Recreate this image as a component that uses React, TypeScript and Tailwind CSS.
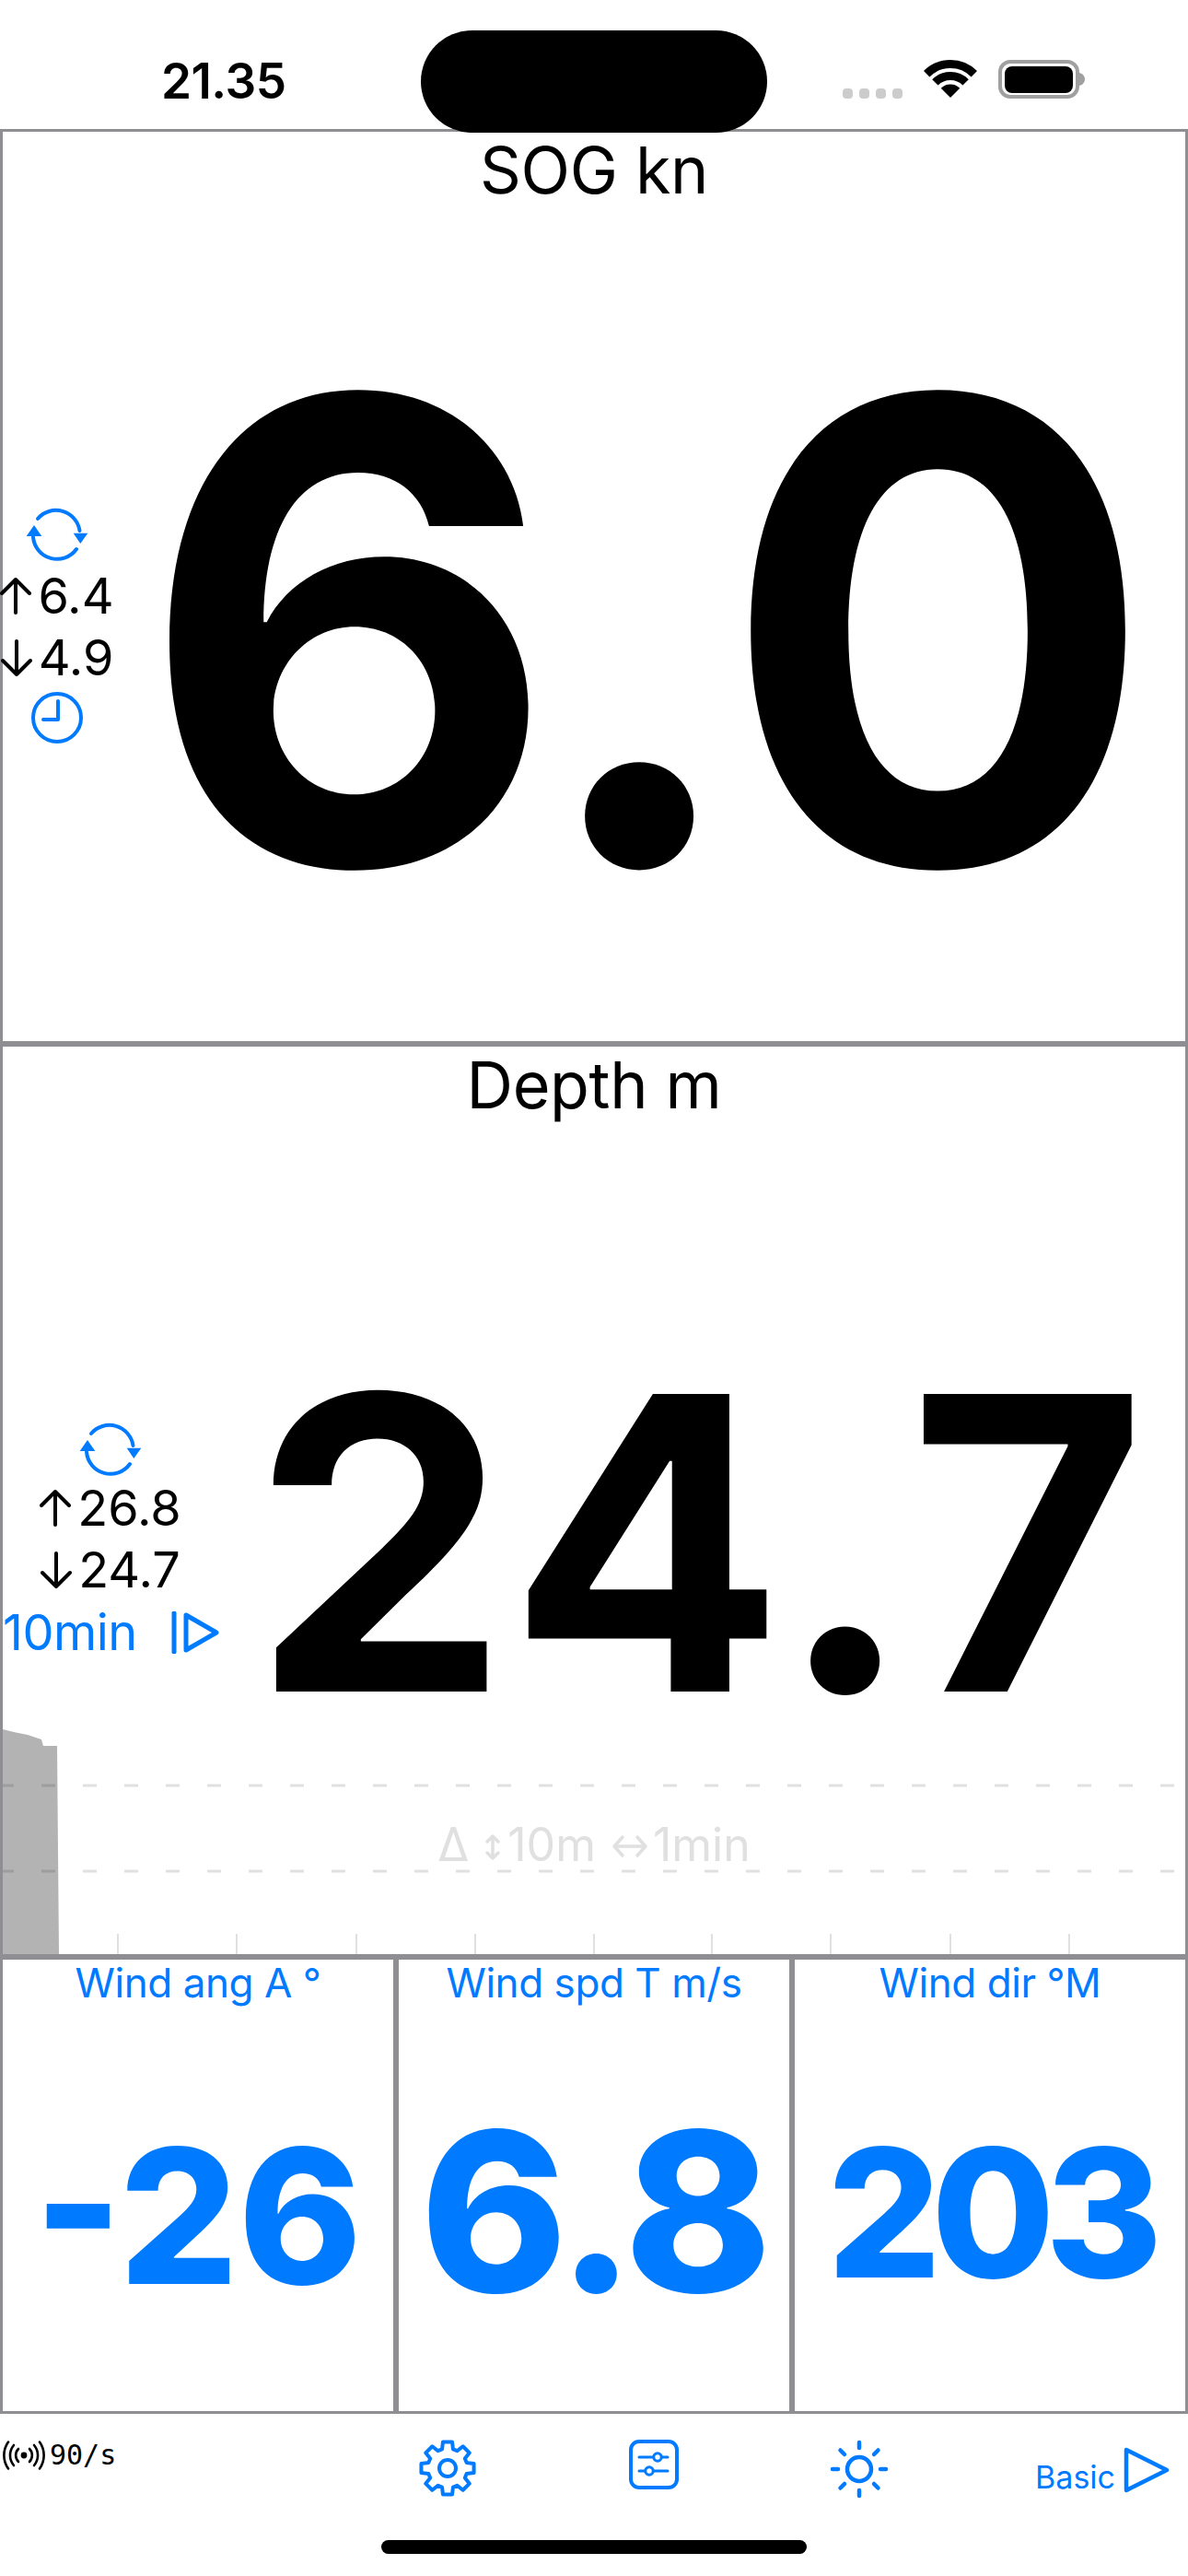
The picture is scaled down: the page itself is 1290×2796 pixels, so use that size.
import React from 'react';

const BLUE = '#007aff';

function RefreshIcon() {
  return (
    <svg width="68" height="60" viewBox="-34 -30 68 60" fill="none" stroke={BLUE} strokeWidth="4" strokeLinecap="round">
      <path d="M-21 -17 A26 26 0 0 1 24.5 -4" />
      <path d="M21 16 A26 26 0 0 1 -26 3" />
      <path d="M17.7 -1.3 H33.3 L25.3 10 Z" fill={BLUE} stroke="none" />
      <path d="M-33.3 2 H-16.7 L-25 -10 Z" fill={BLUE} stroke="none" />
    </svg>
  );
}

function ClockIcon() {
  return (
    <svg width="60" height="60" viewBox="-30 -30 60 60" fill="none" stroke={BLUE} strokeWidth="4" strokeLinecap="round" strokeLinejoin="round">
      <circle r="26" />
      <path d="M1 -18 V2 H-15" />
    </svg>
  );
}

function Arrow({ up }: { up?: boolean }) {
  return (
    <svg width="34" height="42" viewBox="0 0 34 42" fill="none" stroke="#000" strokeWidth="4" strokeLinecap="round" strokeLinejoin="round" className={up ? '' : 'rotate-180'}>
      <path d="M17 39 V3 M2 18 L17 3 L32 18" />
    </svg>
  );
}

function MinMax({ up, value }: { up?: boolean; value: string }) {
  return (
    <div className="flex items-center h-[67px] text-[54px] leading-none text-black gap-[7px]">
      <Arrow up={up} />
      <span>{value}</span>
    </div>
  );
}

function GearIcon() {
  // 8 teeth, one pointing straight up
  const pts: string[] = [];
  const polar = (r: number, deg: number) => {
    const a = ((deg - 90) * Math.PI) / 180;
    return `${(r * Math.cos(a)).toFixed(2)} ${(r * Math.sin(a)).toFixed(2)}`;
  };
  for (let i = 0; i < 8; i++) {
    const a = i * 45;
    pts.push(polar(21.5, a - 16), polar(29, a - 10), polar(29, a + 10), polar(21.5, a + 16));
  }
  return (
    <svg width="66" height="66" viewBox="-33 -33 66 66" fill="none" stroke={BLUE} strokeWidth="4" strokeLinejoin="round">
      <path d={`M${pts.join(' L')} Z`} />
      <circle r="9" />
    </svg>
  );
}

function Cell({ label, value, size, top }: { label: string; value: string; size: string; top: string }) {
  return (
    <div className="border-[3px] border-[#8e8e93] flex flex-col items-center min-w-0">
      <div className="text-[44px] leading-[50px] tracking-[-0.01em] text-[#007aff]">{label}</div>
      <div className={`font-extrabold leading-none text-[#007aff] whitespace-nowrap ${size} ${top}`}>{value}</div>
    </div>
  );
}

export default function App() {
  const ticks = [128, 257, 387, 516, 645, 773, 902, 1032, 1161];

  return (
    <div className="relative w-[1290px] h-[2796px] bg-white overflow-hidden flex flex-col font-['Inter',sans-serif]">
      {/* status bar */}
      <div className="h-[140px] shrink-0 flex items-start">
        <div className="ml-[175px] mt-[59px] text-[53px] leading-[58px] font-semibold tracking-[-0.01em] text-black">21.35</div>
        <div className="ml-auto mt-[65px] mr-[112px] flex items-end gap-[23px]">
          <div className="flex gap-[7px] mb-[1px]">
            <div className="w-[11px] h-[11px] rounded-[4px] bg-[#cccccc]" />
            <div className="w-[11px] h-[11px] rounded-[4px] bg-[#cccccc]" />
            <div className="w-[11px] h-[11px] rounded-[4px] bg-[#cccccc]" />
            <div className="w-[11px] h-[11px] rounded-[4px] bg-[#cccccc]" />
          </div>
          <svg width="58" height="43" viewBox="0 0 58 43" fill="none" stroke="#000">
            <path d="M3.2 15.2 A36.5 36.5 0 0 1 54.8 15.2" strokeWidth="9" />
            <path d="M12.4 24.4 A23.5 23.5 0 0 1 45.6 24.4" strokeWidth="9" />
            <path d="M29 41 L18.75 30.75 A14.5 14.5 0 0 1 39.25 30.75 Z" fill="#000" stroke="none" />
          </svg>
          <svg width="94" height="43" viewBox="0 0 94 43" fill="none">
            <rect x="2" y="2" width="84" height="38" rx="11" stroke="#a0a0a0" strokeWidth="4" />
            <rect x="7" y="7" width="74" height="29" rx="8" fill="#000" />
            <path d="M88 14 C92 15 94 18 94 21 C94 24 92 27 88 28 Z" fill="#a0a0a0" />
          </svg>
        </div>
      </div>
      <div className="absolute left-[457px] top-[33px] w-[376px] h-[111px] rounded-[56px] bg-black z-10" />

      {/* SOG */}
      <div className="h-[993px] shrink-0 border-[3px] border-[#8e8e93] flex flex-col">
        <div className="text-center text-[70px] leading-[76px] tracking-[-0.005em] text-black mt-[4px]">SOG kn</div>
        <div className="flex flex-1 items-center">
          <div className="w-[118px] shrink-0 flex flex-col items-center mt-[5px]">
            <div className="mb-[4px] flex">
              <RefreshIcon />
            </div>
            <MinMax up value="6.4" />
            <MinMax value="4.9" />
            <div className="mt-[1px] flex">
              <ClockIcon />
            </div>
          </div>
          <div className="ml-[31px] mt-[14px] font-bold text-[698px] leading-none tracking-[-0.01em] text-black whitespace-nowrap">6.0</div>
        </div>
      </div>

      {/* Depth */}
      <div className="h-[991px] shrink-0 border-[3px] border-[#8e8e93] flex flex-col">
        <div className="text-center text-[70px] leading-[76px] tracking-[-0.005em] text-black mt-[4px]">Depth m</div>
        <div className="flex flex-1 items-end">
          <div className="w-[234px] shrink-0 flex flex-col items-center mb-[75px]">
            <RefreshIcon />
            <MinMax up value="26.8" />
            <MinMax value="24.7" />
            <div className="self-stretch flex items-center text-[54px] leading-[60px] tracking-[-0.01em] text-[#007aff] mt-[5px]">
              <span>10min</span>
              <svg width="52" height="46" viewBox="0 0 52 46" fill="none" stroke={BLUE} strokeWidth="5" strokeLinecap="round" strokeLinejoin="round" className="ml-[37px] shrink-0">
                <path d="M3 2 V44" />
                <path d="M16 4 V42 L49 23 Z" />
              </svg>
            </div>
          </div>
          <div className="ml-[36px] font-bold text-[444px] leading-[404px] tracking-[0.014em] text-black whitespace-nowrap">24.7</div>
        </div>
        <div className="relative h-[244px] shrink-0">
          <svg width="1284" height="244" viewBox="0 0 1284 244" className="block">
            <path d="M0 0 L12 3 L27 6 L42 11 L44 18 L59 18 L61 244 L0 244 Z" fill="#b3b3b3" />
            <path d="M0 61 H1284" stroke="#000" strokeOpacity="0.12" strokeWidth="3" strokeDasharray="15 30" strokeDashoffset="3" />
            <path d="M0 154 H1284" stroke="#000" strokeOpacity="0.12" strokeWidth="3" strokeDasharray="15 30" strokeDashoffset="3" />
            {ticks.map((t) => (
              <path key={t} d={`M${t - 3} 222 V244`} stroke="#e0e0e0" strokeWidth="2" />
            ))}
          </svg>
          <div className="absolute inset-x-0 top-[95px] flex items-center justify-center text-[50px] leading-[60px] text-[#e0e0e0] whitespace-nowrap">
            <span>Δ</span>
            <svg width="18" height="30" viewBox="0 0 18 30" fill="none" stroke="#e0e0e0" strokeWidth="3.5" strokeLinecap="round" strokeLinejoin="round" className="ml-[17px] mt-[6px]">
              <path d="M9 3 V27 M3 9 L9 3 L15 9 M3 21 L9 27 L15 21" />
            </svg>
            <span className="ml-[7px]">10m</span>
            <svg width="40" height="26" viewBox="0 0 40 26" fill="none" stroke="#e0e0e0" strokeWidth="3.5" strokeLinecap="round" strokeLinejoin="round" className="ml-[17px] mr-[5px] mt-[4px]">
              <path d="M3 13 H37 M12 3 L3 13 L12 23 M28 3 L37 13 L28 23" />
            </svg>
            <span>1min</span>
          </div>
        </div>
      </div>

      {/* Wind */}
      <div className="h-[496px] shrink-0 grid grid-cols-3">
        <Cell label="Wind ang A °" value="-26" size="text-[203px]" top="mt-[127px]" />
        <Cell label="Wind spd T m/s" value="6.8" size="text-[242px] tracking-[-0.02em]" top="mt-[102px]" />
        <Cell label="Wind dir °M" value="203" size="text-[194px] tracking-[-0.055em]" top="mt-[128px]" />
      </div>

      {/* toolbar */}
      <div className="flex items-start flex-1 relative">
        <div className="flex items-center gap-[5px] mt-[29px] pl-[3px] w-[453px] shrink-0">
          <svg width="46" height="32" viewBox="-23 -16 46 32" fill="none" stroke="#000" strokeWidth="2.6" strokeLinecap="round">
            <circle r="3.4" fill="#000" stroke="none" />
            <path d="M-6 -7 A10 10 0 0 0 -6 7 M6 -7 A10 10 0 0 1 6 7" />
            <path d="M-11 -11 A17 17 0 0 0 -11 11 M11 -11 A17 17 0 0 1 11 11" />
            <path d="M-17 -14.5 A25 25 0 0 0 -17 14.5 M17 -14.5 A25 25 0 0 1 17 14.5" />
          </svg>
          <span className="font-['DejaVu_Sans_Mono',monospace] text-[30px] leading-none text-black">90/s</span>
        </div>
        <div className="mt-[26px] flex">
          <GearIcon />
        </div>
        <svg width="54" height="54" viewBox="0 0 54 54" fill="none" stroke={BLUE} strokeWidth="3" strokeLinecap="round" className="mt-[28px] ml-[164px]">
          <rect x="2" y="2" width="50" height="50" rx="9" strokeWidth="4" />
          <path d="M11 19 H26 M36 19 H42 M11 34 H17 M27 34 H42" />
          <circle cx="31" cy="19" r="4.2" />
          <circle cx="22" cy="34" r="4.2" />
        </svg>
        <svg width="66" height="66" viewBox="-33 -33 66 66" fill="none" stroke={BLUE} strokeWidth="4.5" strokeLinecap="round" className="mt-[27px] ml-[163px]">
          <circle r="13" />
          <path d="M0 -29 V-23 M0 23 V29 M-29 0 H-23 M23 0 H29 M-20.5 -20.5 L-16 -16 M20.5 -20.5 L16 -16 M-20.5 20.5 L-16 16 M20.5 20.5 L16 16" />
        </svg>
        <div className="flex items-end ml-auto mr-[20px] mt-[36px]">
          <span className="text-[34px] leading-[44px] text-[#007aff] translate-y-[3px]">Basic</span>
          <svg width="50" height="50" viewBox="0 0 50 50" fill="none" stroke={BLUE} strokeWidth="4.5" strokeLinejoin="round" className="ml-[9px] mb-[2px]">
            <path d="M3 3 V47 L47 25 Z" />
          </svg>
        </div>
      </div>

      <div className="absolute left-[414px] top-[2757px] w-[462px] h-[15px] rounded-full bg-black" />
    </div>
  );
}
